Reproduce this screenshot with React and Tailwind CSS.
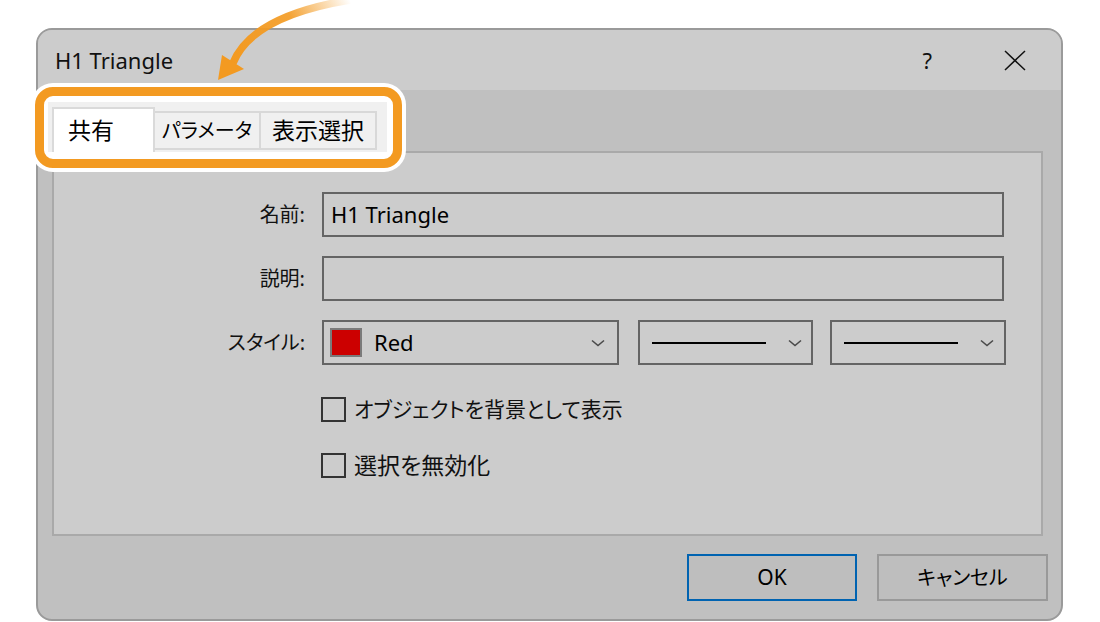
import React from "react";

const FONT = "font-['Noto_Sans','Noto_Sans_CJK_JP',sans-serif] [font-feature-settings:'palt']";

function Chevron() {
  return (
    <svg width="14" height="8" viewBox="0 0 14 8" className="shrink-0">
      <path d="M1 1.5 L7 6.5 L13 1.5" fill="none" stroke="#4a4a4a" strokeWidth="1.6" />
    </svg>
  );
}

function TextBox({ value }) {
  return (
    <div className="flex h-[45px] w-[682px] items-center border-2 border-[#646464] pl-[7px] text-[22px] text-black">
      {value}
    </div>
  );
}

function Row({ label, children }) {
  return (
    <div className="flex items-center">
      <div className="w-[252px] pr-[1px] text-right text-[20px] text-[#111]">{label}</div>
      <div className="ml-[16px] flex">{children}</div>
    </div>
  );
}

function Check({ label, size = "text-[21px]" }) {
  return (
    <label className={`flex h-[25px] items-center gap-[8px] leading-none text-[#111] ${size}`}>
      <span className="h-[25px] w-[25px] shrink-0 border-2 border-[#333]" />
      {label}
    </label>
  );
}

function Arrow() {
  return (
    <svg className="pointer-events-none absolute left-0 top-0" width="1100" height="100" viewBox="0 0 1100 100">
      <defs>
        <linearGradient id="tail" gradientUnits="userSpaceOnUse" x1="350" y1="0" x2="232" y2="63">
          <stop offset="0" stopColor="#f39a21" stopOpacity="0" />
          <stop offset="0.45" stopColor="#f39a21" stopOpacity="0.9" />
          <stop offset="1" stopColor="#f39a21" stopOpacity="1" />
        </linearGradient>
      </defs>
      <path d="M233 63 Q252 16 350 0" fill="none" stroke="url(#tail)" strokeWidth="7.5" />
      <path d="M218 80 L222 55 L244 69 Z" fill="#f39a21" />
    </svg>
  );
}

function TabsCallout() {
  return (
    <div className="absolute left-[35px] top-[87px] h-[81px] w-[367px] rounded-[18px] border-[9px] border-[#f39a21] bg-white ring-4 ring-white">
      <div className="ml-[4px] mt-[6px] flex h-[50px] w-[339px] bg-[#f0f0f0] pl-[4px] pt-[5px]">
        <div className="flex h-[45px] w-[103px] items-start border-x-2 border-t-2 border-[#dadada] bg-white pl-[14px] pt-[4px] text-[23px] text-black">
          共有
        </div>
        <div className="mt-[4px] flex h-[39px] w-[106px] items-center justify-center border-2 border-l-0 border-[#d8d8d8] text-[20px] text-black">
          パラメータ
        </div>
        <div className="mt-[4px] flex h-[39px] w-[116px] items-center justify-center border-2 border-l-0 border-[#d8d8d8] text-[23px] text-black">
          表示選択
        </div>
      </div>
    </div>
  );
}

export default function App() {
  return (
    <div className={`relative h-[622px] w-[1100px] overflow-hidden bg-white pl-[36px] pt-[28px] ${FONT}`}>
      <div className="flex h-[593px] w-[1027px] flex-col overflow-hidden rounded-[16px] border-2 border-[#9a9a9a] bg-[#c0c0c0]">
        {/* title bar */}
        <div className="flex h-[60px] items-center bg-[#cccccc] pl-[17px] pr-[35px]">
          <span className="text-[22px] text-[#111]">H1 Triangle</span>
          <span className="ml-auto mr-[72px] text-[22px] text-[#111]">?</span>
          <svg width="22" height="21" viewBox="0 0 22 21">
            <path d="M1 1 L21 20 M21 1 L1 20" stroke="#111" strokeWidth="1.5" />
          </svg>
        </div>

        {/* body */}
        <div className="flex flex-1 flex-col pl-[14px] pr-[18px] pt-[61px]">
          <div className="flex h-[385px] flex-col border-2 border-[#a9a9a9] bg-[#cccccc] pt-[39px]">
            <div className="flex flex-col gap-[19px]">
              <Row label="名前:">
                <TextBox value="H1 Triangle" />
              </Row>
              <Row label="説明:">
                <TextBox value="" />
              </Row>
              <Row label="スタイル:">
                <div className="flex h-[45px] w-[297px] items-center border-2 border-[#646464] pl-[6px] pr-[12px]">
                  <span className="h-[29px] w-[32px] border-2 border-[#7a7a7a] bg-[#cc0000]" />
                  <span className="ml-[12px] text-[22px] text-black">Red</span>
                  <span className="ml-auto"><Chevron /></span>
                </div>
                <div className="ml-[19px] flex h-[45px] w-[175px] items-center border-2 border-[#646464] pl-[12px] pr-[9px]">
                  <span className="h-[2px] w-[114px] bg-black" />
                  <span className="ml-auto"><Chevron /></span>
                </div>
                <div className="ml-[17px] flex h-[45px] w-[176px] items-center border-2 border-[#646464] pl-[12px] pr-[10px]">
                  <span className="h-[2px] w-[114px] bg-black" />
                  <span className="ml-auto"><Chevron /></span>
                </div>
              </Row>
            </div>
            <div className="ml-[267px] mt-[32px] flex flex-col gap-[31px]">
              <Check label="オブジェクトを背景として表示" />
              <Check label="選択を無効化" size="text-[23px]" />
            </div>
          </div>

          <div className="mt-[18px] flex justify-end gap-[20px]">
            <button className="flex h-[47px] w-[170px] items-center justify-center border-2 border-[#0063b1] bg-[#bebebe] text-[21px] text-black">
              OK
            </button>
            <button className="-mr-[5px] flex h-[47px] w-[171px] items-center justify-center border-2 border-[#999999] bg-[#bebebe] text-[20px] text-black">
              キャンセル
            </button>
          </div>
        </div>
      </div>

      <Arrow />
      <TabsCallout />
    </div>
  );
}
